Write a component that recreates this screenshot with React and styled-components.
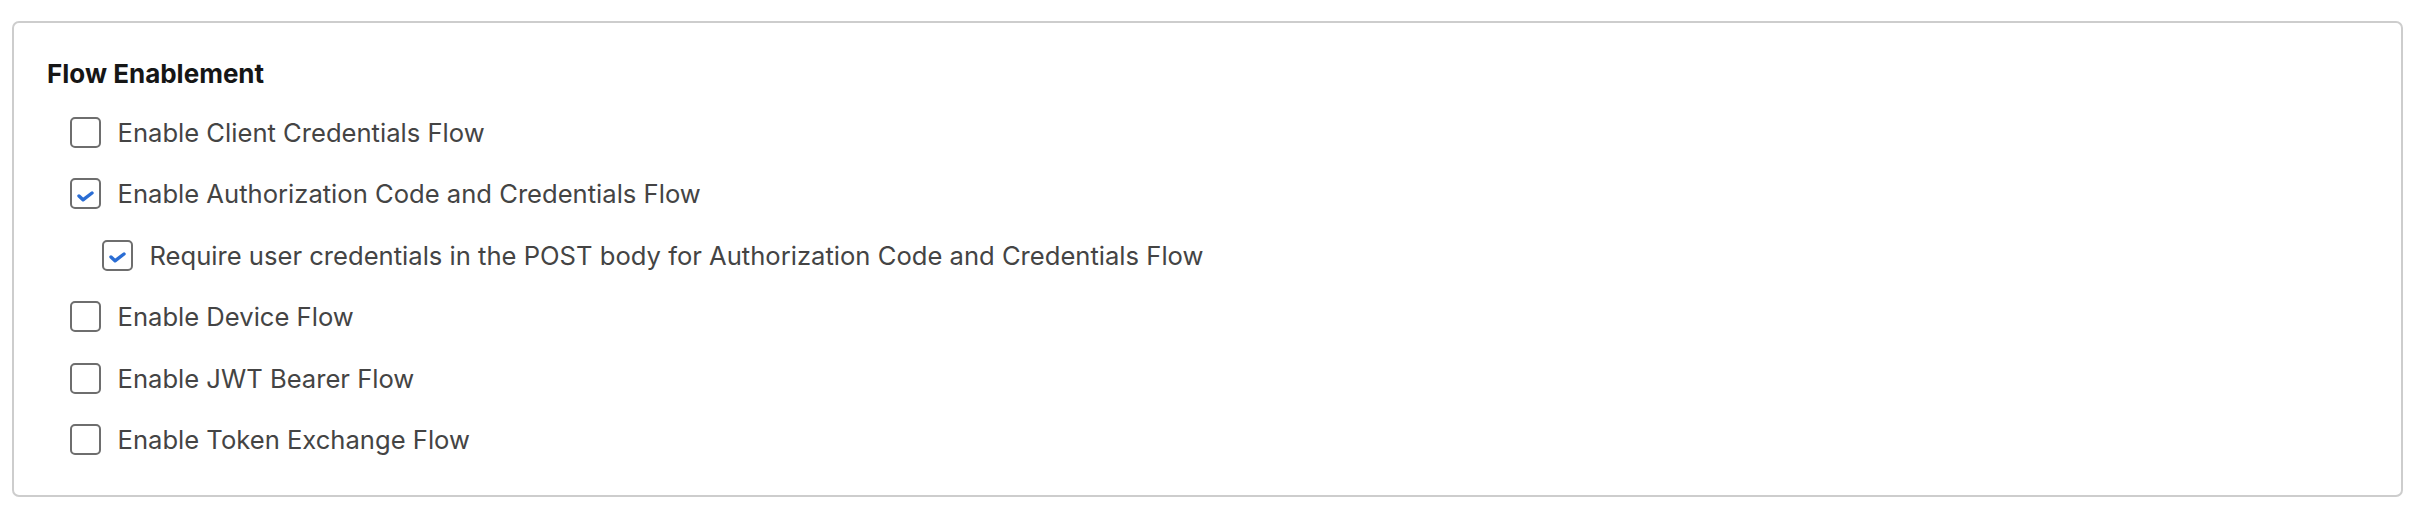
import React from "react";
import styled, { createGlobalStyle } from "styled-components";

const Global = createGlobalStyle`
  html, body {
    margin: 0;
    padding: 0;
    background: #ffffff;
  }
  body {
    font-family: Inter, "Noto Sans", "Liberation Sans", sans-serif;
    -webkit-font-smoothing: antialiased;
  }
`;

const Card = styled.section`
  box-sizing: border-box;
  margin: 21px 11px 0 12px;
  height: 476px;
  border: 2px solid #cdcdcd;
  border-radius: 7px;
  padding: 36px 33px 0 33px;
`;

const Title = styled.h2`
  margin: 0;
  font-size: 26px;
  line-height: 30px;
  font-weight: 700;
  color: #161616;
`;

const List = styled.div`
  display: flex;
  flex-direction: column;
  gap: 30.6px;
  margin-top: 27.5px;
  padding-left: 23px;
`;

const Row = styled.label`
  display: flex;
  align-items: center;
  gap: 16.5px;
  height: 31px;
  padding-left: ${({ $nested }) => ($nested ? "32px" : "0")};
  cursor: pointer;
`;

const Box = styled.span`
  box-sizing: border-box;
  width: 31px;
  height: 31px;
  flex-shrink: 0;
  border: 2px solid #6e6e6e;
  border-radius: 5px;
  background: #fff;
  display: flex;
  align-items: center;
  justify-content: center;
`;

const Text = styled.span`
  font-size: 25.6px;
  line-height: 31px;
  color: #444444;
`;

const Check = () => (
  <svg width="17" height="11" viewBox="0 0 17 11" style={{ marginTop: 5 }}>
    <polyline
      points="2,5 6,8.8 15,2"
      fill="none"
      stroke="#2a6dd4"
      strokeWidth="3.4"
      strokeLinecap="round"
      strokeLinejoin="round"
    />
  </svg>
);

const flows = [
  { label: "Enable Client Credentials Flow", checked: false },
  { label: "Enable Authorization Code and Credentials Flow", checked: true },
  {
    label:
      "Require user credentials in the POST body for Authorization Code and Credentials Flow",
    checked: true,
    nested: true,
  },
  { label: "Enable Device Flow", checked: false },
  { label: "Enable JWT Bearer Flow", checked: false },
  { label: "Enable Token Exchange Flow", checked: false },
];

const App = () => {
  return (
    <>
      <Global />
      <Card>
        <Title>Flow Enablement</Title>
        <List>
          {flows.map((f) => (
            <Row key={f.label} $nested={f.nested}>
              <Box>{f.checked && <Check />}</Box>
              <Text>{f.label}</Text>
            </Row>
          ))}
        </List>
      </Card>
    </>
  );
};

export default App;
